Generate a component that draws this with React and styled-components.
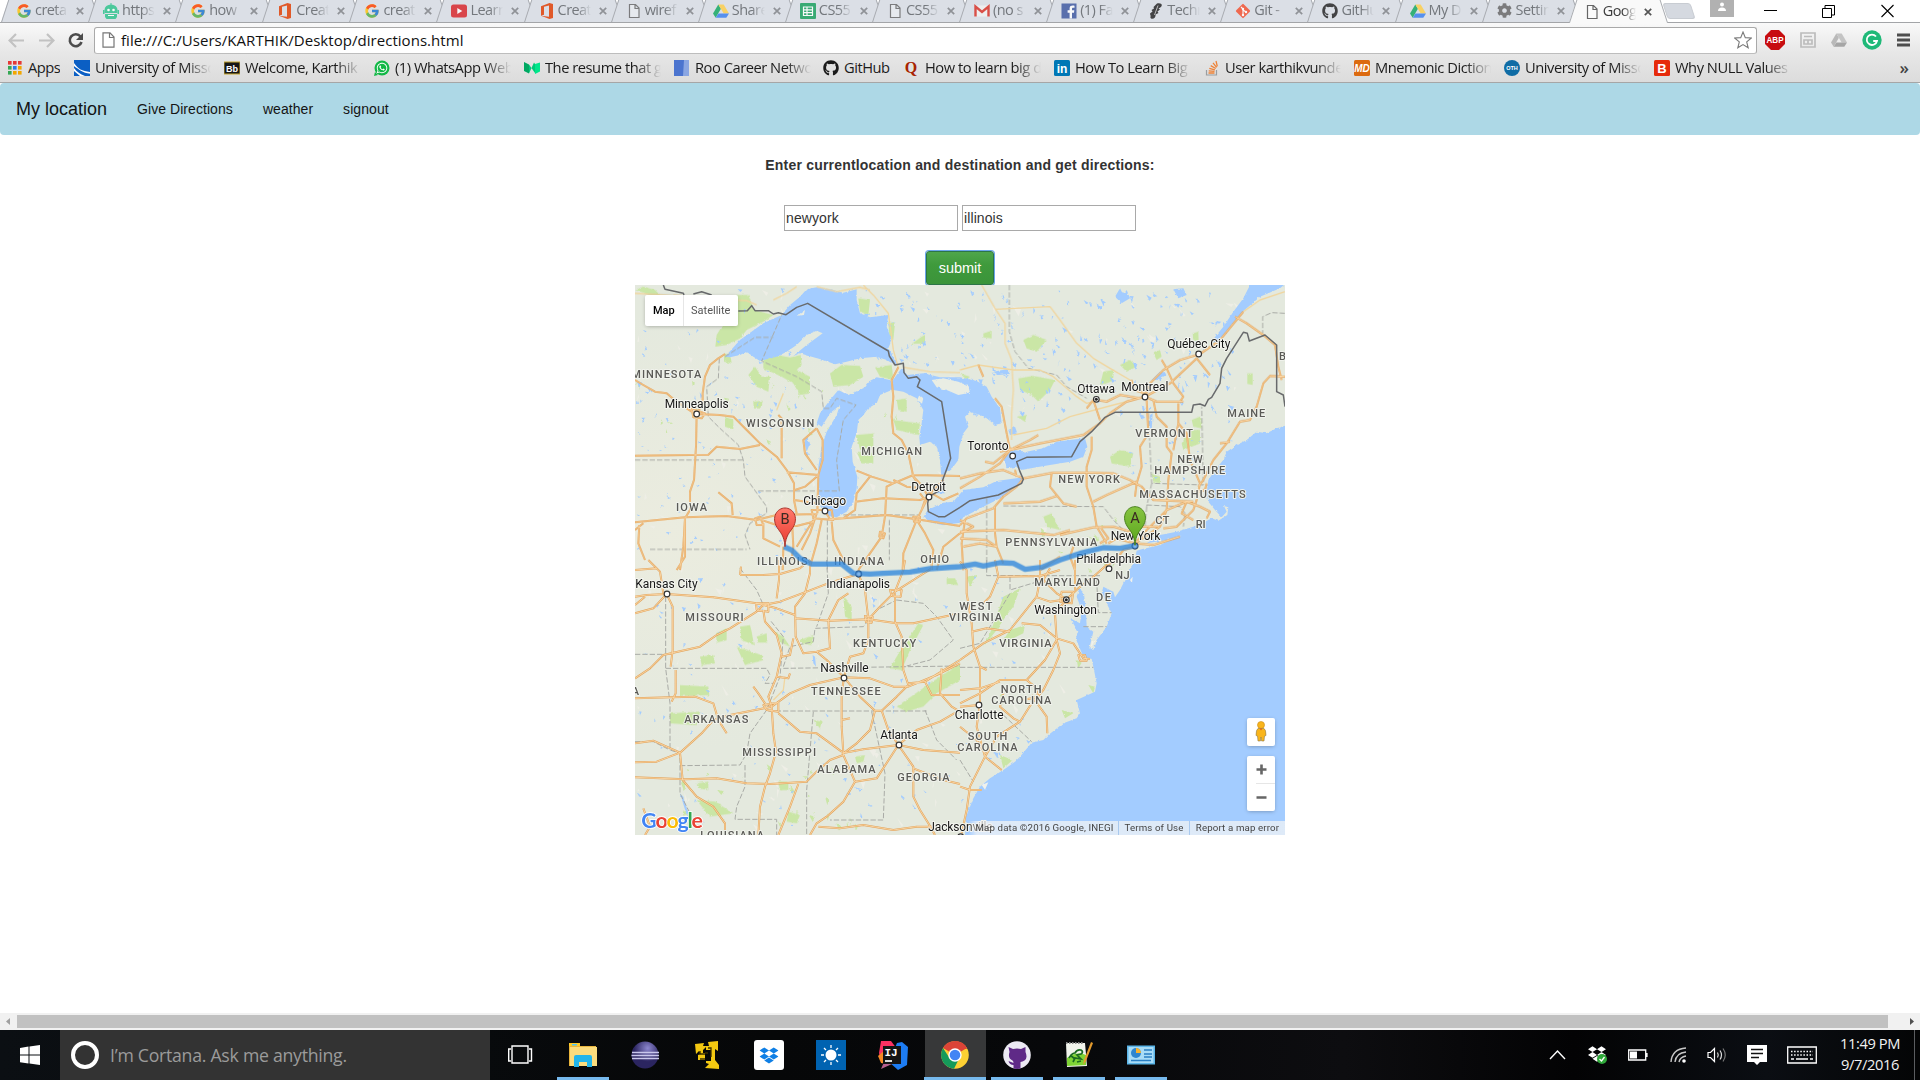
import React from 'react';
import styled, { createGlobalStyle, css } from 'styled-components';
import { FcGoogle } from 'react-icons/fc';
import { FaGithub, FaWhatsapp, FaDropbox, FaCog } from 'react-icons/fa';

const UI = '"Open Sans", "Noto Sans", sans-serif';
const ARIAL = '"Liberation Sans", Arial, sans-serif';

const Global = createGlobalStyle`
  * { box-sizing: border-box; }
  body { margin: 0; background: #fff; overflow: hidden; }
`;

const Screen = styled.div`
  width: 1920px;
  height: 1080px;
  display: flex;
  flex-direction: column;
  font-family: ${UI};
  overflow: hidden;
`;

/* ---------- tab strip ---------- */
const TabStrip = styled.div`
  height: 23px;
  display: flex;
  padding-left: 5px;
  background: #fff;
  position: relative;
  border-bottom: 1px solid #a3a5a8;
  flex: none;
`;
const Tab = styled.div`
  width: 87.1px;
  height: ${(p) => (p.$active ? 23 : 22)}px;
  flex: none;
  position: relative;
  z-index: ${(p) => (p.$active ? 3 : 1)};
  display: flex;
  align-items: center;
  padding: 0 8px 0 11px;
  color: ${(p) => (p.$active ? '#3c3c3c' : '#74787d')};
  &::before,
  &::after {
    content: '';
    position: absolute;
    z-index: -1;
    top: -2px;
    bottom: 0;
    background: ${(p) => (p.$active ? '#f9f9f9' : '#dbdfe6')};
  }
  &::before {
    left: 0;
    width: 60%;
    border-left: 1px solid #a8abb0;
    transform: skewX(-18deg);
  }
  &::after {
    right: -4px;
    width: 62%;
    border-right: 1px solid #a8abb0;
    transform: skewX(18deg);
  }
`;
const TabIcon = styled.span`
  width: 16px;
  height: 16px;
  flex: none;
  display: flex;
  opacity: ${(p) => (p.$active ? 1 : 0.82)};
`;
const TabTitle = styled.span`
  width: 33px;
  margin-left: 3px;
  font-size: 14.5px;
  line-height: 18px;
  height: 20px;
  letter-spacing: -0.55px;
  white-space: pre;
  overflow: hidden;
  mask-image: linear-gradient(90deg, #000 60%, transparent);
`;
const TabClose = styled.svg`
  width: 8px;
  height: 8px;
  margin-left: 8px;
  flex: none;
`;
const NewTab = styled.div`
  width: 28px;
  height: 16px;
  margin: 3px 0 0 5px;
  background: #d5d9e0;
  border: 1px solid #c8ccd2;
  border-radius: 3px;
  transform: skewX(18deg);
  flex: none;
`;
const WindowControls = styled.div`
  margin-left: auto;
  display: flex;
  padding-right: 26px;
`;
const UserBadge = styled.div`
  width: 24px;
  height: 17px;
  background: #b1b1b1;
  margin-right: 30px;
`;
const ControlIcon = styled.svg`
  width: 13px;
  height: 22px;
  margin-left: ${(p) => p.$gap || 0}px;
`;

/* ---------- toolbar ---------- */
const ToolArea = styled.div`
  height: 60px;
  flex: none;
  background: linear-gradient(#f9f9f9, #e7e7e7 50%, #dcdcdc);
  border-bottom: 1px solid #a6a6a6;
`;
const Toolbar = styled.div`
  height: 34px;
  display: flex;
  align-items: center;
  padding: 0 8px;
`;
const NavIcon = styled.svg`
  width: 17px;
  height: 17px;
  flex: none;
  margin-right: ${(p) => p.$gap || 0}px;
`;
const Omnibox = styled.div`
  width: 1663px;
  height: 27px;
  flex: none;
  margin-left: 8px;
  border: 1px solid #a9a9a9;
  border-bottom-color: #bdbdbd;
  border-radius: 3px;
  background: #fff;
  display: flex;
  align-items: center;
  padding: 0 4px 0 7px;
`;
const Url = styled.span`
  flex: 1;
  margin-left: 6px;
  font-size: 15px;
  letter-spacing: 0.04px;
  color: #111;
`;
const Extensions = styled.div`
  display: flex;
  align-items: center;
  justify-content: space-between;
  width: 145px;
  margin-left: 8px;
`;
const Bookmarks = styled.div`
  height: 24px;
  display: flex;
  align-items: center;
  padding: 0 11px 2px 8px;
  color: #1c1c1c;
`;
const Bookmark = styled.div`
  width: ${(p) => p.$w}px;
  height: 22px;
  flex: none;
  display: flex;
  align-items: center;
  svg { flex: none; }
`;
const BookmarkText = styled.span`
  margin-left: 5px;
  width: ${(p) => (p.$fade ? '116px' : 'auto')};
  overflow: hidden;
  white-space: pre;
  font-size: 14.7px;
  line-height: 18px;
  height: 21px;
  letter-spacing: -0.47px;
  ${(p) => p.$fade && css`mask-image: linear-gradient(90deg, #000 78%, transparent);`}
`;
const More = styled.span`
  margin-left: auto;
  font-size: 17px;
  line-height: 18px;
  font-weight: 600;
  color: #444;
`;

/* ---------- page ---------- */
const Page = styled.main`
  height: 930px;
  flex: none;
  font-family: ${ARIAL};
  font-size: 14px;
  color: #333;
  display: flex;
  flex-direction: column;
  align-items: center;
`;
const SiteNav = styled.nav`
  align-self: stretch;
  height: 52px;
  background: #add8e6;
  border-radius: 4px;
  display: flex;
  align-items: center;
  gap: 30px;
  padding-left: 16px;
  color: #141414;
`;
const NavLink = styled.span`
  letter-spacing: 0.06px;
`;
const Brand = styled.span`
  font-size: 18px;
`;
const Heading = styled.h4`
  margin: 20px 0 0;
  font-size: 14px;
  line-height: 20px;
  letter-spacing: 0.2px;
`;
const Fields = styled.div`
  display: flex;
  gap: 4px;
  margin-top: 30px;
`;
const Field = styled.input`
  width: 174px;
  height: 26px;
  border: 1px solid #a9a9a9;
  padding: 1px;
  font: 14px ${ARIAL};
  letter-spacing: 0.1px;
  color: #333;
  outline: none;
`;
const Submit = styled.button`
  width: 68px;
  height: 34px;
  margin: 20px 0 0;
  border: 1px solid #2d7548;
  border-radius: 3px;
  background: linear-gradient(#4fa64c, #3f9a3c 40%, #3b943a);
  box-shadow: 0 0 0 1px #6ba5ea;
  color: #fff;
  font: 14.5px ${ARIAL};
  padding: 0 0 1px;
`;
const MapBox = styled.div`
  width: 650px;
  height: 550px;
  position: relative;
  overflow: hidden;
  background: #e4e9de;
  font-family: Roboto, sans-serif;
`;
const MapArt = styled.svg`
  display: block;
  width: 650px;
  height: 550px;
`;
const MapTypes = styled.div`
  position: absolute;
  left: 10px;
  top: 10px;
  height: 31px;
  display: flex;
  background: #fff;
  border-radius: 2px;
  box-shadow: 0 1px 4px -1px rgba(0, 0, 0, 0.35);
`;
const MapType = styled.span`
  width: ${(p) => p.$w}px;
  line-height: 31px;
  text-align: center;
  font-size: 11px;
  font-weight: ${(p) => (p.$on ? 500 : 400)};
  color: ${(p) => (p.$on ? '#000' : '#565656')};
  & + & { border-left: 1px solid #e6e6e6; }
`;
const MapControl = styled.div`
  position: absolute;
  left: 612px;
  top: ${(p) => p.$top}px;
  width: 28px;
  height: ${(p) => p.$h}px;
  background: #fff;
  border-radius: 2px;
  box-shadow: 0 1px 4px -1px rgba(0, 0, 0, 0.35);
`;
const MapFooter = styled.div`
  position: absolute;
  right: 0;
  bottom: 0;
  height: 14px;
  display: flex;
  background: linear-gradient(90deg, rgba(245, 245, 245, 0), rgba(245, 245, 245, 0.72) 9px);
  font-size: 9.7px;
  line-height: 14px;
  color: #444;
`;
const FootItem = styled.span`
  width: ${(p) => p.$w}px;
  text-align: center;
  white-space: nowrap;
  padding-left: ${(p) => p.$pad || 0}px;
  letter-spacing: ${(p) => p.$ls || 0}px;
  & + & { border-left: 1px solid #a9c9ee; }
`;

/* ---------- scrollbar & taskbar ---------- */
const ScrollTrack = styled.div`
  height: 17px;
  flex: none;
  background: #f1f1f1;
  display: flex;
  align-items: center;
`;
const ScrollThumb = styled.div`
  width: 1871px;
  height: 13px;
  background: #c1c1c1;
  margin-right: auto;
`;
const ScrollArrow = styled.svg`
  width: 17px;
  height: 17px;
`;
const Taskbar = styled.footer`
  height: 50px;
  flex: none;
  display: flex;
  background: linear-gradient(90deg, #0b0f13, #060708 40%, #07080a 55%, #0d0d10 70%, #030304 82%, #0b0e13 92%, #040506);
`;
const Start = styled.div`
  width: 60px;
  display: flex;
  align-items: center;
  justify-content: center;
`;
const Cortana = styled.div`
  width: 430px;
  background: #333;
  display: flex;
  align-items: center;
  padding-left: 11px;
  gap: 11px;
  color: #9b9b9b;
  font-size: 17.7px;
  letter-spacing: -0.27px;
`;
const Ring = styled.div`
  width: 28px;
  height: 28px;
  border: 4px solid #fff;
  border-radius: 50%;
`;
const TaskItem = styled.div`
  width: 62px;
  height: 50px;
  display: flex;
  align-items: center;
  justify-content: center;
  background: ${(p) => (p.$active ? 'linear-gradient(90deg, transparent 1px, #373839 1px)' : 'none')};
  border-bottom: 3px solid transparent;
  border-image: ${(p) => (p.$open
    ? (p.$active ? 'linear-gradient(90deg, transparent 1px, #76b9ed 1px)' : 'linear-gradient(90deg, transparent 6px, #76b9ed 6px, #76b9ed 56px, transparent 56px)') + ' 1'
    : 'none')};
  border-top: 0;
  border-left: 0;
  border-right: 0;
  svg { margin-top: 3px; }
`;
const Tray = styled.div`
  margin-left: auto;
  display: flex;
  align-items: center;
`;
const TrayIcon = styled.svg`
  height: 30px;
  width: ${(p) => p.$w}px;
  margin-right: ${(p) => p.$gap}px;
`;
const Clock = styled.div`
  width: 64px;
  text-align: center;
  color: #f2f2f2;
  font-size: 14.7px;
  line-height: 21px;
  letter-spacing: -0.4px;
  padding-bottom: 2px;
  margin-right: 12px;
`;
const DesktopEdge = styled.div`
  width: 6px;
  height: 50px;
  border-left: 1px solid #5b5d60;
`;

/* ---------- small icons ---------- */
const S = ({ s = 16, children, vb = '0 0 16 16' }) => (
  <svg width={s} height={s} viewBox={vb}>{children}</svg>
);
const PageIcon = () => <S><path d="M3.5 1.5h6l3.5 3.5v9.5h-9.5zM9 1.5v4h4" fill="#fff" fillOpacity=".4" stroke="#666" strokeWidth="1.2" /></S>;
const Robot = () => (
  <S><path d="M1.5 10V7a6.5 5.5 0 0 1 13 0v3z" fill="#2dc48d" /><path d="M7.5 0h1v2h-1zM0 7h1.5v4H0zM14.500 7H16v4h-1.500zM2 11h12v3l-1.500 2h-9L2 14z" fill="#2dc48d" /><circle cx="5.500" cy="7" r="1.300" fill="#fff" /><circle cx="10.500" cy="7" r="1.300" fill="#fff" /><path d="M5 12.500h6" stroke="#fff" /></S>
);
const Office = () => <S><path d="M2 3.300L10.500 0 14 1v14l-3.500 1L2 12.800l8 1V2.500L5 3.700v8L2 12.800z" fill="#e23c00" /></S>;
const YT = () => <S><rect x="0" y="1.500" width="16" height="13" rx="2.500" fill="#d9252a" /><path d="M6.300 5l5 3-5 3z" fill="#fff" /></S>;
const Drive = ({ grey }) => (
  <S><path d="M5.300 1.500L0 10.500l2.700 4.300 5.200-9z" fill={grey ? '#b9b9b9' : '#11a861'} /><path d="M5.300 1.500h5.400l5.300 9h-5.300z" fill={grey ? '#c4c4c4' : '#ffcf48'} /><path d="M5.400 10.500H16l-2.700 4.300H2.700z" fill={grey ? '#a6a6a6' : '#3a7ff0'} /></S>
);
const Sheets = () => <S><rect width="16" height="16" rx="1" fill="#169f5c" /><path d="M3.500 4h9v8.500h-9zM3.500 6.800h9M3.500 9.600h9M7 4v8.500" fill="none" stroke="#fff" strokeWidth="1.200" /></S>;
const Gmail = () => <S><path d="M1 2.500h14v11H1z" fill="#f2f2f2" /><path d="M1.500 13.500V3.500L8 9l6.500-5.500v10" fill="none" stroke="#d93025" strokeWidth="2.400" /></S>;
const Facebook = () => <S><rect width="15" height="15" x=".5" y=".5" fill="#3d57a0" /><path d="M11 15.500V9.700h2l.3-2.400H11V6c0-.8.300-1.200 1.200-1.200h1.300V2.700C11 2.300 8.600 2.500 8.600 5.500v1.800h-2v2.400h2v5.800z" fill="#fff" /></S>;
const Techo = () => <S><path d="M9 .5c4-.8 6 1 4 3.500l-2.500 1.500 1.500 1-2.500 2 1 1.500-3 1.500C8 14 6 16.500 3 15.500c-1.500-1 0-3 1-4L2.500 13 2 10.500l2.500-2-1-1.500L6 5.500 5.500 4z" fill="#222" /><path d="M10 2.500L6.500 12" stroke="#ddd" strokeWidth=".8" /></S>;
const GitIcon = () => <S><rect x="2.700" y="2.700" width="10.600" height="10.600" rx="1" transform="rotate(45 8 8)" fill="#f4502f" /><path d="M6 4l2 2v6M8 7l3 2" stroke="#fff" strokeWidth="1.100" fill="none" /><circle cx="8" cy="6" r="1.200" fill="#fff" /><circle cx="8" cy="12" r="1.200" fill="#fff" /><circle cx="11" cy="9" r="1.200" fill="#fff" /></S>;

const AppsIcon = () => {
  const c = ['#e53935', '#e53935', '#e53935', '#35a853', '#2b7de9', '#f2a600', '#35a853', '#f2a600', '#f2a600'];
  return <svg width="15" height="16" viewBox="0 0 15 16">{c.map((f, i) => <rect key={i} x={(i % 3) * 5} y={1 + Math.floor(i / 3) * 5} width="3.600" height="3.600" fill={f} />)}</svg>;
};
const Badge = ({ bg, fg = '#fff', t, fs = 10, round, italic, y = 11.7 }) => (
  <svg width="16" height="16" viewBox="0 0 16 16">
    {round ? <circle cx="8" cy="8" r="8" fill={bg} /> : <rect width="16" height="16" rx="1.500" fill={bg} />}
    <text x="8" y={y} textAnchor="middle" fontSize={fs} fontWeight="700" fontStyle={italic ? 'italic' : 'normal'} fontFamily="Liberation Sans" fill={fg}>{t}</text>
  </svg>
);

const TABS = [
  [<FcGoogle size={16} />, 'creta'], [<Robot />, 'https'], [<FcGoogle size={16} />, 'how '], [<Office />, 'Creat'],
  [<FcGoogle size={16} />, 'creat'], [<YT />, 'Learn'], [<Office />, 'Creat'], [<PageIcon />, 'wiref'],
  [<Drive />, 'Share'], [<Sheets />, 'CS55'], [<PageIcon />, 'CS55'], [<Gmail />, '(no s'],
  [<Facebook />, '(1) Fa'], [<Techo />, 'Techn'], [<GitIcon />, 'Git - '], [<FaGithub size={16} color="#222" />, 'GitHu'],
  [<Drive />, 'My Dr'], [<FaCog size={15} color="#666" />, 'Settin'], [<PageIcon />, 'Goog'],
];

const BOOKMARKS = [
  [66, <AppsIcon />, 'Apps', false],
  [150, <S><path d="M0 0h16v16H0z" fill="#0b5fc4" /><path d="M0 3c4 6 8 8 16 9v1.800C9 13 4 9 0 6zM0 8c3 4 6 6 11 8H6L0 11z" fill="#fff" /></S>, 'University of Misso'],
  [150, <svg width="16" height="16"><rect y="2" width="16" height="12" fill="#161616" stroke="#c8a830" /><text x="8" y="11.500" fontSize="9" fontWeight="700" textAnchor="middle" fill="#fff" fontFamily="Liberation Sans">Bb</text></svg>, 'Welcome, Karthik'],
  [150, <svg width="16" height="16" viewBox="0 0 16 16"><circle cx="8" cy="8" r="7.500" fill="#12b846" /><path d="M0 16l1-4 3 3z" fill="#12b846" /><FaWhatsapp size={12} x={2} y={2} color="#fff" /></svg>, '(1) WhatsApp Web'],
  [150, <S><path d="M0 2l5 2.500v9L0 11z" fill="#00a862" /><path d="M5 4.500L11 13V4l-1-1.500L5 13.500z" fill="#00c979" /><path d="M11 4l5-1.500v9L11 14z" fill="#00e68a" /></S>, 'The resume that g'],
  [149, <S><path d="M0 0h10v16H0z" fill="#4b74cf" /><path d="M10 0h5v16h-6z" fill="#8aa6e2" /></S>, 'Roo Career Netwo'],
  [82, <FaGithub size={16} color="#1b1b1b" />, 'GitHub', false],
  [149, <svg width="15" height="16"><text x="6" y="13" textAnchor="middle" fontFamily="Liberation Serif" fontWeight="700" fontSize="16" fill="#a82400">Q</text></svg>, 'How to learn big d'],
  [150, <Badge bg="#0077b5" t="in" fs={12} y={12.5} />, 'How To Learn Big '],
  [150, <S><path d="M2.500 10v5h10v-5" fill="none" stroke="#9a9da0" strokeWidth="1.200" /><path d="M4.500 13h6M4.700 10.800l5.800.6M5.300 8.300l5.600 1.500M6.700 5.600l5 2.900M9 2.800l3.600 4.500M12 1l1.300 5.400" stroke="#ef8236" strokeWidth="1.300" /></S>, 'User karthikvunde'],
  [150, <Badge bg="#dc6a10" t="MD" fs={10} italic />, 'Mnemonic Dictiona'],
  [150, <Badge bg="#0f6ca5" t="OTH" fs={5.5} round y={10} />, 'University of Misso'],
  [150, <Badge bg="#e62b0b" t="B" fs={13} y={12.6} />, 'Why NULL Values '],
];

/* ---------- map data (three drawing units per pixel, four tiles) ---------- */
const TILE = [[0, 0], [990, 0], [0, 840], [990, 840]];
const toD = (s) => 'M' + s;
const ROADS = [
  ['15,300 40,315 75,335 110,340 140,365 185,395 200,402', '285,222 265,235 240,255 225,290 218,340 218,370 200,402', '200,402 270,405 310,410 350,450 390,490 440,530 470,570 492,610 492,660 500,700', '200,402 198,500 192,600 180,635 180,690 165,715 160,800 150,870', '15,527 235,524 260,500 330,507 390,495', '470,577 565,585', '445,405 455,415 455,535', '560,445 520,480 525,520 560,570', '560,445 578,480 578,540 565,585 562,700', '495,630 525,620 560,590', '492,660 560,670', '15,727 165,712 290,708 380,720 400,715 440,705 560,702', '265,637 305,670 308,705', '400,730 400,775 450,800', '400,722 440,735 500,738 550,725', '485,700 490,800 485,840', '460,800 458,870', '28,735 25,790 45,840', '15,750 40,730', '140,870 165,830 165,715', '585,693 600,718 640,715 675,690 680,640 720,590', '680,572 725,590 790,610 850,585 990,588', '600,718 770,705 860,718 990,738', '675,665 760,655 870,660 900,650', '805,262 785,300 790,350 785,410 790,460 815,480 835,520 850,590 870,610 895,650', '790,610 770,620 765,710 755,770 720,820 685,870', '895,650 870,700 860,720 840,770 820,820 818,870', '860,720 885,760 910,810 905,850', '605,725 610,780 640,840', '560,700 540,760 515,810', '575,720 560,790 540,860', '550,720 500,800', '850,590 870,620 940,660 985,640', '940,600 900,640', '545,690 605,690 610,720 550,715z', '375,715 390,710 400,735 380,735z', '850,710 870,710 870,725 852,725z', '185,385 225,400 215,415 190,412z', '990,760 940,800 920,870', '750,755 765,760 760,775 748,770z', '870,640 885,660 875,690', '790,600 830,620 880,625'],
  ['55,255 70,290', '105,355 125,380 140,460 150,510 120,550 60,590 0,625', '75,545 100,550 150,510 240,490 370,465 420,430 450,400 500,365 555,350', '400,360 420,420', '410,360 440,365 480,345 540,355', '380,385 400,360', '555,350 570,310 610,270 660,240 720,222 780,180 850,95', '555,350 630,310 710,235 750,285', '605,240 620,265 640,310 670,350 660,365', '555,350 590,365 670,365', '825,110 860,130 910,165 945,195 955,260 965,300', '560,360 565,460 540,500 545,560 530,610 525,650', '580,360 590,410 620,440 620,500 635,520 625,600 620,690 600,740 525,790', '655,370 655,430 680,460 690,540 720,610 710,660 700,690', '655,430 640,510', '975,290 930,288 910,310 890,380 870,420 840,425 800,490 760,540 730,600 715,620', '780,490 810,485', '395,470 395,510 380,560 380,620 400,680 410,740 440,790', '190,595 280,578 380,577 460,580 510,600 545,620 580,660 700,665', '190,595 170,620 130,650 100,685 20,715 0,735', '275,580 270,620 290,645 310,670 350,680', '130,670 240,665 290,648', '400,665 440,645 530,605', '0,755 130,750 280,765 330,750', '300,765 400,742 460,740 530,760', '105,680 105,760 110,800 130,850', '15,720 5,790 10,870', '525,790 560,750 620,690 680,665 720,680 750,695 740,715', '610,745 650,740 700,690', '525,800 490,810 460,850', '525,790 580,795 660,770', '445,790 470,775 525,790', '340,800 330,830 345,870', '240,870 300,830', '120,515 160,505 210,480 235,465', '0,595 60,580 130,570 190,595', '165,570 170,590', '0,720 40,740 0,760', '680,665 665,700 700,720', '595,740 530,740 500,780', '700,640 735,630 740,610', '420,740 445,775 420,790', '560,340 520,330 515,300', '110,800 80,780 0,775', '10,800 60,790 110,800'],
  ['15,110 50,105 110,102 250,112 380,130 440,145 495,165', '15,160 70,145 110,102', '55,0 90,35 100,100', '15,30 15,30 80,25', '110,102 128,140 128,270 122,320', '15,355 60,325 100,285 210,260 260,225 300,205 380,155 400,135', '400,135 450,125 530,95 600,68 685,42', '330,45 400,45 450,42 510,25 540,0', '330,45 333,20', '447,0 447,60 440,115', '540,0 540,40 525,100 495,140 497,230 520,280 560,275 600,265 595,180', '495,175 600,182 715,178 800,190 850,190 990,160', '400,150 405,185 440,225 455,280 440,350 415,410 425,440', '455,290 480,285 490,235', '595,180 625,120 655,100', '685,42 705,90 715,178 715,240 700,280 660,290 642,352', '715,178 750,140 795,95 820,30 825,0', '795,100 795,185 815,230 820,330 835,375', '795,95 850,60 905,25', '905,0 905,30', '560,275 590,300 642,352', '642,352 540,375 480,400 425,440 300,465 250,480 215,520 150,578 80,605 15,607', '15,415 120,412 195,410 250,430 265,480 290,520', '137,330 137,400 125,425', '370,380 385,400 405,430', '440,350 475,355 480,340', '425,440 430,520 438,575 420,640 405,680 390,740 385,825', '400,435 445,428 445,455 410,450z', '378,130 415,130 415,155 380,150z', '445,460 510,515 560,520 635,575', '642,352 635,400 635,500 640,580', '642,352 690,410 735,452 755,452 775,510 805,555', '642,352 720,355 790,380 835,380 920,345 990,310', '835,375 800,410 755,452', '735,452 720,510 680,550 640,580', '635,480 660,475', '635,580 700,568 805,555', '640,585 600,600 560,635 530,665 420,672 350,670 260,655 165,658 15,652', '150,578 158,660 200,710 250,740 285,790 285,825', '15,550 70,542 150,578', '640,585 675,665 640,725 590,770 560,790 540,825', '675,665 740,655 805,555', '805,555 850,620 850,710 870,750 895,790 915,825', '805,555 880,570 990,578', '850,625 940,660 990,672', '505,672 480,740 445,825', '565,800 630,805 700,795 790,810 860,800 920,800', '885,365 905,405 990,405', '935,325 930,400 965,440 990,455', '805,555 860,510 930,485 990,450', '40,745 60,800 45,825', '780,90 815,90 812,110 785,108z', '705,168 728,170 725,188 708,186z', '835,370 885,365 990,300', '15,135 45,110'],
  ['0,5 20,30 20,100 35,190 40,260 60,320 60,430 50,500 75,590 30,680 20,750 5,820', '105,0 115,50 90,110 70,130', '115,50 240,48 300,30', '240,0 240,60 230,110 150,210 70,250 0,300', '35,215 80,205 150,215', '225,110 270,125 320,118 355,85 400,50 440,15 470,0', '270,25 250,60 290,100 320,118', '345,0 345,90', '320,118 285,160 290,240 255,300 200,360 120,360 60,400 0,430', '185,190 240,195 290,235 340,250 370,295 390,297', '290,240 300,280 280,330 250,390 215,430 180,485 110,530 75,590', '0,390 60,385 120,365', '215,405 235,435 260,470 262,520', '130,400 120,440 160,475 180,485', '0,440 57,435', '75,590 125,630', '0,680 30,690 65,690', '0,500 50,540 75,580', '60,320 80,330', '305,95 340,95 335,130 300,125z', '355,285 375,285 380,302 360,302z', '200,360 225,380 235,410 190,420'],
];
const MINOR = [
  ['15,40 100,45 200,55', '130,45 300,60 350,62 380,75', '430,60 470,40 500,20', '560,20 620,35 690,22 720,30', '700,15 730,45 775,100 785,170 790,210 805,262', '820,262 900,275 990,278', '440,390 460,340'],
  ['65,15 105,85 135,130 135,190 155,240 160,330 155,400 155,480', '105,88 270,80 300,120 350,190 400,235 450,265 510,300 555,350', '0,270 55,255 160,270 240,270 280,290 350,350 380,370 400,365', '160,465 260,445 330,410 460,375 520,360', '850,95 900,60 975,35'],
  ['430,420 460,390 465,350'], [],
];
const INTL = [
  ['100,15 105,28 160,40 162,45', '190,42 215,35 245,45', '325,93 352,92 365,77 375,92 415,92 430,102 445,98 468,104 500,82 533,70 775,213 778,228 795,255 820,250 822,278 835,295 860,290 870,300 862,320 935,365 962,535 938,600 940,625 897,650 893,670 895,695 925,710 945,710 990,682'],
  ['0,682 30,662 115,645 185,610 190,598 180,575 170,545 200,532 335,530 360,485 395,455 435,412 465,397 695,397 700,375 720,372 735,378 745,358 755,352 780,310 785,265 800,235 850,157 862,160 868,183 915,165 950,195 950,335 970,345 975,380'],
  [], [],
];
const STATE_LINES = [
  ['268,235 265,295 230,320 235,410 270,445 325,495 340,540 345,590 410,680 410,700 360,730 345,765 360,808', '15,540 340,540', '60,808 350,808', '385,633 628,633 620,540 640,420 678,375 620,355 600,385 580,385 575,335 500,290 395,243 455,105', '285,230 375,172 430,172', '592,720 592,870', '778,720 778,840', '640,705 865,705'],
  ['148,15 148,155 165,215 205,265 290,285 320,320 380,355', '565,400 575,610 730,615 725,380', '130,678 430,680 460,720 520,780', '560,675 660,680 675,700 670,740', '80,655 80,870', '560,680 555,740', '975,100 935,98 908,110 908,160', '575,610 560,680'],
  ['330,25 380,90 400,135', '107,110 107,325 120,430 120,570 150,580 150,700 180,760', '107,325 410,325 420,345 405,370 430,370', '15,283 107,283', '150,617 330,615 350,580 360,520 410,450 450,350 460,230 420,180', '460,320 480,260 550,245 555,205 700,200 740,150 800,120', '460,325 990,318', '415,453 890,453', '550,455 530,690 530,825', '725,455 765,640 760,780 600,780', '345,615 345,680 320,740 315,778 440,778 440,825', '590,0 595,100 560,200', '800,120 880,130 920,170 970,240 900,300 830,318', '885,450 920,540 980,600', '15,545 70,545 120,570'],
  ['0,322 400,322', '0,265 60,250 150,100', '80,0 80,47 420,47', '130,465 215,545', '410,60 415,158 455,158', '150,50 150,90 250,60', '370,200 440,200', '0,600 40,665'],
];
const PARKS = [
  ['275,60 320,45 355,45 372,90 430,105 400,125 350,150 330,175 290,195 256,200 260,165 275,140', '400,240 440,225 480,232 512,225 515,255 500,270 540,290 540,340 510,345 490,310 455,290 400,265', '600,280 635,255 690,258 700,290 660,315 610,320', '735,262 785,255 790,300 750,290', '355,285 375,260 395,290 420,290 415,335 380,320', '370,365 398,362 395,385 372,385', '685,55 720,60 715,105 690,95', '680,465 730,460 730,500 690,510', '680,515 730,520 730,550 695,550', '800,360 830,355 830,395 805,390', '790,420 870,430 865,465 800,450', '775,125 795,130 790,180 778,170', '15,30 40,20 75,30 95,50 60,45', '282,220 300,225 305,250 282,245', '875,170 885,165 885,190 845,192', '285,410 310,420 310,450 285,440'],
  ['175,295 220,288 285,300 270,330 235,365 215,345 180,330', '190,180 220,165 260,180 230,215 200,205', '480,255 510,240 530,260 500,275', '430,275 460,270 455,305 420,315', '70,160 95,152 95,175 70,172', '450,530 480,510 520,520 510,560 455,550', '690,450 720,450 720,490 670,510 665,490', '862,280 878,280 878,315 862,312', '250,710 275,700 300,750 260,740', '695,420 720,410 725,445 700,440', '170,410 200,405 195,425', '698,160 715,155 716,185 700,180', '580,220 600,210 605,230 590,240', '575,580 600,590 600,610 580,605', '0,280 30,290 20,300'],
  ['258,220 290,205 290,240 260,248', '330,200 360,195 365,215 372,255 335,240', '380,230 410,220 412,248 385,248', '320,260 395,285 400,300 345,315', '210,290 250,285 255,310 215,315', '150,375 235,380 238,405 150,408', '120,460 210,455 200,495 120,490', '640,110 665,140 665,180 645,170', '820,260 865,190 880,195 840,270 815,330 780,325 800,290', '800,440 900,370 990,310 990,360 920,400 880,440 830,455', '200,670 235,665 235,690 205,685', '200,720 255,725 310,760 240,770', '510,240 550,225 545,255 515,250', '475,755 510,765 500,790 470,785', '430,215 460,230 480,260 455,250', '550,480 575,485 570,505', '675,590 705,585 700,605 680,610', '445,665 475,665 475,690 450,690', '950,55 975,55 985,75 950,72'],
  ['130,110 180,85 160,140 140,165 110,210 70,260 90,220', '150,210 195,195 190,220 120,255', '20,50 50,45 30,80', '305,450 340,460 315,475', '385,375 405,380 400,400', '120,585 158,600 130,625', '350,300 365,308 355,325', '120,405 130,400 128,435'],
];
const WATER = [
  ['285,230 330,180 400,130 455,105 480,75 510,50 530,28 560,22 600,28 640,38 680,28 680,60 690,100 720,112 775,105 770,140 785,180 775,205 800,245 795,255 770,240 740,230 690,235 650,245 615,253 580,240 545,230 510,220 490,228 530,195 578,160 560,152 530,165 500,195 470,215 440,230 390,243 370,230 350,215 330,225 300,232',
    '625,330 655,345 700,325 715,305 740,292 780,300 790,315 785,330 750,345 740,370 715,385 700,405 685,420 680,460 665,500 668,545 682,590 680,625 670,665 650,695 620,712 595,708 575,680 565,640 565,560 575,500 590,455 620,405 630,375 600,400 575,440 560,430 570,400 600,360',
    '785,305 815,265 832,285 880,280 930,292 990,292 1040,303 1070,320 1085,350 1110,385 1115,430 1095,435 1070,415 1050,405 1020,395 1005,410 1015,440 1000,460 988,500 985,540 970,560 940,585 935,600 930,540 920,500 900,485 870,495 868,470 875,430 880,390 860,355 820,335 790,330',
    '893,690 940,668 970,665 1000,630 1060,622 1100,603 1180,592 1178,606 1130,645 1060,680 1000,712 990,728 940,736 905,728 880,712',
    '522,485 530,470 540,490 530,515', '915,625 945,615 945,640 920,640'],
  ['130,530 160,510 200,515 250,505 290,485 330,480 375,475 382,500 370,530 330,545 270,555 230,562 185,570 170,560 140,565 135,545',
    '990,0 960,25 900,50 860,85 840,105 820,130 800,160 770,185 750,190 790,140 820,95 850,55 875,5 875,0',
    '1000,430 950,445 920,460 890,455 860,480 830,495 800,515 790,540 765,570 745,600 740,640 745,665 765,690 785,712 800,695 792,678 805,682 802,705 775,722 755,715 735,725 700,740 650,755 600,765 560,790 620,780 665,765 600,795 545,808 530,812 525,835 500,890 480,930 465,952 460,935 430,920 425,940 445,980 455,1000 440,1040 410,1080 400,1110 388,1105 400,1055 380,1040 378,1000 372,940 358,925 350,950 365,990 360,1030 330,1015 355,1055 345,1070 370,1130 395,1137 400,1160 410,1210 405,1235 350,1260 360,1300 350,1315 310,1330 265,1365 250,1380 215,1388 180,1430 165,1445 130,1470 90,1495 60,1520 40,1555 18,1610 15,1680 1000,1680',
    '145,450 165,440 172,460 150,465', '640,28 670,25 680,45 655,55', '100,275 140,268 150,282 115,285', '570,405 578,400 575,450 568,440', '465,50 480,25 490,45 500,30 510,55 485,70', '575,300 600,275 620,285 590,300'],
  ['548,285 555,290 558,320 550,310', '150,700 160,710 178,770 170,765'], ['100,575 115,580 112,595'],
];
const STATES = [
  [['MINNESOTA', 4, 214, 293], ['WISCONSIN', 348, 553, 441], ['MICHIGAN', 694, 876, 525], ['IOWA', 138, 231, 693], ['ILLINOIS', 381, 533, 855], ['INDIANA', 612, 762, 855], ['OHIO', 871, 957, 849]],
  [['MAINE', 802, 916, 411], ['VERMONT', 526, 699, 471], ['NEW', 652, 728, 549], ['HAMPSHIRE', 583, 796, 581], ['NEW YORK', 295, 480, 609], ['MASSACHUSETTS', 538, 857, 654], ['CT', 586, 628, 732], ['RI', 707, 737, 743], ['PENNSYLVANIA', 136, 412, 798], ['B', 957, 978, 239]],
  [['MISSOURI', 166, 341, 183], ['KENTUCKY', 669, 859, 261], ['TENNESSEE', 543, 752, 404], ['A', 5, 26, 404], ['ARKANSAS', 163, 355, 489], ['MISSISSIPPI', 337, 558, 588], ['ALABAMA', 562, 737, 639], ['GEORGIA', 802, 959, 663], ['LOUISIANA', 211, 402, 836]],
  [['WEST', -2, 97, 150], ['VIRGINIA', -33, 126, 183], ['MARYLAND', 223, 420, 78], ['NJ', 466, 509, 57], ['DE', 408, 453, 123], ['VIRGINIA', 118, 275, 261], ['NORTH', 122, 245, 399], ['CAROLINA', 94, 274, 432], ['SOUTH', 23, 142, 540], ['CAROLINA', -8, 173, 573]],
];
const CITIES = [
  [['Minneapolis', 104, 296, 385, 200, 402], ['Detroit', 844, 948, 634, 897, 651], ['Chicago', 520, 648, 676, 585, 693]],
  [['Québec City', 622, 811, 205, 716, 222], ['Ottawa', 352, 465, 340, 409, 358, 1], ['Montreal', 484, 625, 334, 555, 351], ['Toronto', 22, 146, 511, 158, 528], ['New York', 452, 601, 781, 525, 798], ['Philadelphia', 349, 543, 850, 447, 866]],
  [['Kansas City', 16, 203, 85, 111, 102], ['Indianapolis', 589, 780, 85, 686, 42], ['Nashville', 571, 716, 337, 642, 354], ['Atlanta', 751, 863, 537, 807, 555], ['Jacksonville', 895, 1088, 813, 992, 830]],
  [['Washington', 223, 411, 162, 319, 119, 1], ['Charlotte', -16, 131, 477, 57, 435]],
];

/* Seeded scatter used for ponds and bare patches. */
function scatter(n, seed, x0, y0, x1, y1, size) {
  let s = seed;
  const r = () => ((s = (s * 16807) % 2147483647) / 2147483647);
  let d = '';
  for (let i = 0; i < n; i++) {
    const x = x0 + r() * (x1 - x0);
    const y = y0 + r() * (y1 - y0);
    const w = (r() - 0.3) * size;
    const h = (0.3 + r()) * size;
    d += `M${x.toFixed(0)},${y.toFixed(0)}l${w.toFixed(0)},${h.toFixed(0)}l${(4 + r() * 4).toFixed(0)},${(-h * r()).toFixed(0)}z`;
  }
  return d;
}
const PONDS = scatter(170, 71, 990, 30, 1800, 420, 17) + scatter(60, 13, 20, 20, 500, 420, 15) + scatter(45, 991, 700, 20, 990, 250, 14)
  + scatter(120, 37, 20, 860, 1150, 1640, 12) + scatter(60, 5, 20, 420, 560, 850, 9) + scatter(25, 88, 1500, 400, 1800, 600, 10) + scatter(30, 19, 1080, 900, 1300, 1400, 9);
const PATCHES = scatter(60, 409, 20, 30, 1900, 420, 26) + scatter(120, 203, 20, 420, 1300, 1640, 26);
const GREENS = scatter(24, 77, 20, 280, 800, 480, 18) + scatter(30, 717, 150, 1450, 700, 1640, 20) + scatter(16, 717, 1230, 700, 1500, 880, 18);

const Tiles = ({ data, ...rest }) => (
  <g {...rest}>
    {data.map((list, i) => <path key={i} transform={`translate(${TILE[i]})`} d={list.map(toD).join('')} />)}
  </g>
);
const Areas = ({ data, ...rest }) => (
  <g {...rest}>
    {data.map((list, i) => <path key={i} transform={`translate(${TILE[i]})`} d={list.map((s) => 'M' + s + 'z').join('')} />)}
  </g>
);
const Pin = ({ x, y, id, light, dark, edge, label }) => (
  <g transform={`translate(${x},${y})`}>
    <linearGradient id={id} x1="0" y1="0" x2="0" y2="1"><stop offset="0" stopColor={light} /><stop offset="1" stopColor={dark} /></linearGradient>
    <path d="M0,0C-2,-34 -14,-42 -24,-58C-42,-88 -24,-116 0,-116C24,-116 42,-88 24,-58C14,-42 2,-34 0,0z" fill={`url(#${id})`} stroke={edge} strokeWidth="3" />
    <text x="0" y="-67" textAnchor="middle" fontSize="44" fill="#3a2a22">{label}</text>
  </g>
);

const RoadMap = () => (
  <MapArt viewBox="15 15 1950 1650">
    <defs>
      <filter id="coast" x="-2%" y="-2%" width="104%" height="104%" filterUnits="objectBoundingBox">
        <feTurbulence type="fractalNoise" baseFrequency="0.09" numOctaves="3" seed="4" />
        <feDisplacementMap in="SourceGraphic" scale="8" xChannelSelector="R" yChannelSelector="G" />
      </filter>
      <radialGradient id="plain" cx="0.05" cy="0.45" r="0.4"><stop offset="0" stopColor="#ebecdf" /><stop offset="1" stopColor="#e4e9de" /></radialGradient>
    </defs>
    <rect x="15" y="15" width="1950" height="1650" fill="url(#plain)" />
    <path d={PATCHES} fill="#eeeee6" />
    <g filter="url(#coast)">
      <Areas data={PARKS} fill="#cae6a6" />
      <path d={GREENS} fill="#cae6a6" />
      <path d={PONDS} fill="#a3ccff" />
      <Areas data={WATER} fill="#a3ccff" />
      <path d="M905,300L940,295 985,305 1015,318 1020,338 985,345 950,330 920,322zM500,108L525,90 522,104zM868,345l12,10 -4,16 -14,-12z" fill="#e9ede4" />
      <path d="M1395,1080l-14,28 4,-24zM1500,900l8,-10 -2,20zM1055,1515l20,-8 -10,22z" fill="#f0f1ec" />
    </g>
    <Tiles data={STATE_LINES} fill="none" stroke="#a9aba6" strokeWidth="3" strokeDasharray="16 6" />
    <Tiles data={MINOR} fill="none" stroke="#f0d6a0" strokeWidth="4" strokeLinejoin="round" />
    <Tiles data={ROADS} fill="none" stroke="#e2a45c" strokeWidth="6" strokeLinejoin="round" />
    <Tiles data={ROADS} fill="none" stroke="#fddcae" strokeWidth="2.500" strokeLinejoin="round" />
    <Tiles data={INTL} fill="none" stroke="#686a6c" strokeWidth="4.500" strokeLinejoin="round" />
    {STATES.map((list, i) => (
      <g key={i} transform={`translate(${TILE[i]})`} fontSize="33" fontWeight="500" fill="#5a5a56" stroke="#f0f2ec" strokeWidth="6" paintOrder="stroke" strokeLinejoin="round">
        {list.map(([t, a, b, y]) => <text key={t + y} x={a} y={y} textLength={b - a}>{t}</text>)}
      </g>
    ))}
    {CITIES.map((list, i) => (
      <g key={i} transform={`translate(${TILE[i]})`}>
        {list.map(([t, a, b, y, cx, cy, cap]) => (
          <g key={t}>
            <circle cx={cx} cy={cy} r="8.500" fill="#fff" stroke="#333" strokeWidth="3.500" />
            {cap && <circle cx={cx} cy={cy} r="4.500" fill="#222" />}
            <text x={a} y={y} textLength={b - a} fontSize="36" fill="#161616" stroke="#f4f5f0" strokeWidth="6" paintOrder="stroke" strokeLinejoin="round">{t}</text>
          </g>
        ))}
      </g>
    ))}
    <path d="M462,800L485,810 510,835 545,852 635,852 670,880 720,882 760,880 840,876 900,866 990,860 1035,852 1060,858 1110,848 1150,850 1185,868 1235,862 1290,840 1350,820 1420,803 1470,805 1515,797" fill="none" stroke="#2e86dc" strokeOpacity=".78" strokeWidth="16" strokeLinejoin="round" />
    <circle cx="1515" cy="798" r="8" fill="#7db4ea" stroke="#1d5fa8" strokeWidth="3" />
    <circle cx="686" cy="882" r="8" fill="#7db4ea" stroke="#1d5fa8" strokeWidth="3" />
    <Pin x={465} y={800} id="pinB" light="#ff7a6c" dark="#e8392f" edge="#a8332b" label="B" />
    <Pin x={1515} y={796} id="pinA" light="#86c440" dark="#5aa51c" edge="#48801c" label="A" />
    <text x="34" y="1644" fontSize="64" fontFamily="Lato" fontWeight="700" textLength="185" stroke="#fff" strokeWidth="5" paintOrder="stroke">
      <tspan fill="#4285f4">G</tspan><tspan fill="#ea4335">o</tspan><tspan fill="#fbbc05">o</tspan><tspan fill="#4285f4">g</tspan><tspan fill="#34a853">l</tspan><tspan fill="#ea4335">e</tspan>
    </text>
  </MapArt>
);

const TaskIcons = {
  view: <svg width="26" height="20" fill="none" stroke="#fff" strokeWidth="1.400"><path d="M4 1h16v17H4zM3 4H.7v12H3M21 4h2.500v12H21" /></svg>,
  files: <svg width="28" height="26" viewBox="0 0 28 26"><path d="M0 1h11v3h16v20H0z" fill="#e9b53c" /><path d="M1 5h27v19H1z" fill="#fbdc7d" /><path d="M0 1h11v3H0z" fill="#ffca28" /><path d="M3 2h5v1.500H3z" fill="#4fc3f7" /><path d="M5 25V15q0-2 2-2h14q2 0 2 2v10h-5v-5h-8v5z" fill="#22b5ea" /></svg>,
  eclipse: <svg width="30" height="30" viewBox="0 0 30 30"><radialGradient id="ecl" cx=".6" cy=".25"><stop offset="0" stopColor="#8d87cf" /><stop offset="1" stopColor="#2b2560" /></radialGradient><circle cx="15" cy="15" r="13.500" fill="url(#ecl)" /><path d="M2 12.500h27M1.500 15.500h27.500M2 18.500h27" stroke="#c9c6ec" strokeWidth="1.300" /></svg>,
  vm: <svg width="28" height="28" viewBox="0 0 28 28"><path d="M2 3l9-1-1 3h6L15 1l10-1v10l-3-2v11l4 5v4l-14-1 4-4-3-1v-2h5V9h-5V6l-3 3v3h2v7H5v-5l3-1-2-3-3 3z" fill="#f3c811" /><path d="M7 10v3h5M15 7h3v9M7 18h5M15 12h-3" stroke="#3c2f00" strokeWidth="1.300" fill="none" /></svg>,
  dropbox: <svg width="30" height="30" viewBox="0 0 30 30"><rect width="30" height="30" rx="3" fill="#fff" /><FaDropbox x={5.5} y={6} size={19} color="#0f7fe5" /></svg>,
  weather: <svg width="30" height="30" viewBox="0 0 30 30"><rect width="30" height="30" fill="#0063b1" /><circle cx="15" cy="15" r="5.500" fill="#fff" /><path d="M15 5v3M15 22v3M5 15h3M22 15h3M8 8l2 2M20 20l2 2M22 8l-2 2M8 22l2-2" stroke="#fff" strokeWidth="1.300" /></svg>,
  idea: <svg width="30" height="30" viewBox="0 0 30 30"><path d="M3 1l10 0 6 8L3 21 1 13z" fill="#fc3163" /><path d="M0 16l8-7v15l-5-1z" fill="#f68a25" /><path d="M19 3l5-1 6 5-1 18-9 5-9-8z" fill="#1d7cf2" /><path d="M3 29l4-9 7 4z" fill="#b8608f" /><rect x="5" y="6" width="18" height="18" fill="#151515" /><text x="6.500" y="16" fontSize="11" fontWeight="700" fontFamily="Liberation Mono" fill="#fff">IJ</text><path d="M7 21h7" stroke="#fff" strokeWidth="1.700" /></svg>,
  chrome: <svg width="28" height="28" viewBox="0 0 28 28"><circle cx="14" cy="14" r="13.800" fill="#fdd033" /><path d="M14 14L2 7A13.800 13.800 0 0 1 26 7z" fill="#db4437" /><path d="M14 .2A13.800 13.800 0 0 1 26.200 7.700H14z" fill="#db4437" /><path d="M2 7a13.800 13.800 0 0 0 11 20.800l5.500-11L14 14 8.500 17z" fill="#159a5a" /><circle cx="14" cy="14" r="6.700" fill="#fff" /><circle cx="14" cy="14" r="5.300" fill="#4285f4" /></svg>,
  github: <svg width="28" height="28" viewBox="0 0 28 28"><circle cx="14" cy="14" r="13.800" fill="#eceaf3" /><path d="M5.500 6l4.500 2q4-1 8 0l4.500-2v5q2.500 6-1 8.500-2 1-4 1.500v6.500q-3 .8-7 0V24q-4 0-5-4l5 2q0-2-1-2.500-5-2.500-3-8.500z" fill="#5f2a87" /></svg>,
  npp: <svg width="30" height="30" viewBox="0 0 30 30"><path d="M2 3h19l2 23-20 1z" fill="#f1f4ec" /><path d="M3 18q9-7 19-3v10l-19 1z" fill="#7fd435" /><path d="M5 18q3-5 6-5 2-4 6-3 3 2 0 4l-4 1 4 4-6-1-2 4M6 15l5 4M13 22l4-1" stroke="#1b6a22" strokeWidth="1.700" fill="none" /><path d="M2 3h18" stroke="#888" strokeWidth="2" strokeDasharray="1.500 1.500" /><path d="M27 2l-7 18-1 5 3-4L29 3z" fill="#e49b2d" /></svg>,
  panel: <svg width="28" height="20" viewBox="0 0 28 20"><rect width="28" height="19" y=".5" fill="#5bb5e8" /><rect x="1.500" y="2" width="25" height="16" fill="#a8dcf7" /><circle cx="9" cy="8" r="5" fill="#2d86d0" /><path d="M9 8V3a5 5 0 0 1 5 5z" fill="#f7b22c" /><path d="M17 5h8M17 9h8M17 12h8M4 15.500h20" stroke="#2a7fc4" strokeWidth="1.500" /></svg>,
};
const TASKS = [['view'], ['files', 1], ['eclipse'], ['vm'], ['dropbox'], ['weather'], ['idea'], ['chrome', 1, 1], ['github', 1], ['npp', 1], ['panel', 1]];

export default function App() {
  return (
    <Screen>
      <Global />
      <TabStrip>
        {TABS.map(([icon, title], i) => {
          const on = i === TABS.length - 1;
          return (
            <Tab key={i} $active={on}>
              <TabIcon $active={on}>{icon}</TabIcon>
              <TabTitle>{title}</TabTitle>
              <TabClose viewBox="0 0 8 8"><path d="M.8.8l6.400 6.400M7.200.8L.8 7.200" stroke={on ? '#555' : '#8f9297'} strokeWidth="1.700" /></TabClose>
            </Tab>
          );
        })}
        <NewTab />
        <WindowControls>
          <UserBadge><svg width="24" height="17"><circle cx="12" cy="4.500" r="2" fill="#fff" /><path d="M8 11q0-3.500 4-3.500t4 3.500z" fill="#fff" /></svg></UserBadge>
          <ControlIcon viewBox="0 0 13 22"><path d="M0 10.500h13" stroke="#000" /></ControlIcon>
          <ControlIcon $gap={45} viewBox="0 0 13 22"><path d="M.5 8.500h9v9h-9zM3 8V5.500h9.500V15H10" fill="none" stroke="#000" /></ControlIcon>
          <ControlIcon $gap={46} viewBox="0 0 13 22"><path d="M.5 5l12 12M12.500 5L.5 17" stroke="#000" strokeWidth="1.100" /></ControlIcon>
        </WindowControls>
      </TabStrip>

      <ToolArea>
        <Toolbar>
          <NavIcon $gap={13} viewBox="0 0 17 17" fill="none" stroke="#c2c2c2" strokeWidth="2.200"><path d="M16 8.500H2M8 2L1.500 8.500 8 15" /></NavIcon>
          <NavIcon $gap={12} viewBox="0 0 17 17" fill="none" stroke="#c2c2c2" strokeWidth="2.200"><path d="M1 8.500h14M9 2l6.500 6.500L9 15" /></NavIcon>
          <NavIcon $gap={2} viewBox="0 0 17 17"><path d="M13.500 4.500A6 6 0 1 0 14.500 10" fill="none" stroke="#4c4c4c" strokeWidth="2.600" /><path d="M16 1v7H9z" fill="#4c4c4c" /></NavIcon>
          <Omnibox>
            <svg width="13" height="16" viewBox="0 0 13 16"><path d="M1 .8h7L12 5v10.200H1zM7.500.8v4.700H12" fill="#fff" stroke="#777" strokeWidth="1.200" /></svg>
            <Url>file:///C:/Users/KARTHIK/Desktop/directions.html</Url>
            <svg width="18" height="18" viewBox="0 0 18 18"><path d="M9 1l2.300 5.600 6 .4-4.600 3.900 1.500 5.900L9 13.600l-5.200 3.200 1.500-5.900L.7 7l6-.4z" fill="#fff" stroke="#7a7a7a" strokeWidth="1.100" /></svg>
          </Omnibox>
          <Extensions>
            <svg width="20" height="20" viewBox="0 0 20 20"><path d="M6 0h8l6 6v8l-6 6H6l-6-6V6z" fill="#c70d10" /><text x="10" y="13.300" fontSize="9.500" textLength="17" lengthAdjust="spacingAndGlyphs" fontWeight="700" textAnchor="middle" fill="#fff" fontFamily="Liberation Sans">ABP</text></svg>
            <svg width="16" height="16" viewBox="0 0 16 16" fill="none" stroke="#bcbcbc" strokeWidth="1.700"><path d="M1 1h14v14H1zM4 4.500h8M4 8h8v4H4zM8 8v4" /></svg>
            <Drive grey />
            <svg width="20" height="20" viewBox="0 0 20 20"><circle cx="10" cy="10" r="9.700" fill="#1fb978" /><path d="M14 6.500A5.200 5.200 0 1 0 15 11h-3.800" fill="none" stroke="#fff" strokeWidth="1.800" /></svg>
            <svg width="13" height="14" viewBox="0 0 13 14"><path d="M0 2h13M0 7h13M0 12h13" stroke="#4d4d4d" strokeWidth="3" /></svg>
          </Extensions>
        </Toolbar>
        <Bookmarks>
          {BOOKMARKS.map(([w, icon, text, fade = true], i) => (
            <Bookmark key={i} $w={w}>{icon}<BookmarkText $fade={fade}>{text}</BookmarkText></Bookmark>
          ))}
          <More>»</More>
        </Bookmarks>
      </ToolArea>

      <Page>
        <SiteNav>
          <Brand>My location</Brand>
          <NavLink>Give Directions</NavLink>
          <NavLink>weather</NavLink>
          <NavLink>signout</NavLink>
        </SiteNav>
        <Heading>Enter currentlocation and destination and get directions:</Heading>
        <Fields>
          <Field defaultValue="newyork" />
          <Field defaultValue="illinois" />
        </Fields>
        <Submit>submit</Submit>
        <MapBox>
          <RoadMap />
          <MapTypes>
            <MapType $on $w={37.5}>Map</MapType>
            <MapType $w={55.5}>Satellite</MapType>
          </MapTypes>
          <MapControl $top={433} $h={28}>
            <svg width="28" height="28" viewBox="0 0 28 28"><circle cx="14" cy="7" r="3.500" fill="#f9b51b" stroke="#c98a14" strokeWidth=".6" /><path d="M11 10.500h6q2 1 2 7l-1.500.5L17 23h-2.400l-.6-4-.6 4H11l-.5-5L9 17.500q0-6 2-7z" fill="#f9b51b" stroke="#8f7a4a" strokeWidth=".6" /><path d="M12.500 10.500h3L14 12.500z" fill="#e2641b" /></svg>
          </MapControl>
          <MapControl $top={471} $h={55}>
            <svg width="28" height="55" viewBox="0 0 28 55"><path d="M9.500 13.500h10M14.500 8.500v10M9.500 41.500h10" stroke="#666" strokeWidth="2.600" /><path d="M9 27.500h19" stroke="#e6e6e6" /></svg>
          </MapControl>
          <MapFooter>
            <FootItem $w={150} $pad={3} $ls={0.14}>Map data ©2016 Google, INEGI</FootItem>
            <FootItem $w={71} $ls={0.14}>Terms of Use</FootItem>
            <FootItem $w={96} $ls={0.14}>Report a map error</FootItem>
          </MapFooter>
        </MapBox>
      </Page>

      <ScrollTrack>
        <ScrollArrow viewBox="0 0 17 17"><path d="M10 5v7L6 8.500z" fill="#a0a0a0" /></ScrollArrow>
        <ScrollThumb />
        <ScrollArrow viewBox="0 0 17 17"><path d="M7 5v7l4-3.500z" fill="#505050" /></ScrollArrow>
      </ScrollTrack>

      <Taskbar>
        <Start><svg width="20" height="20" viewBox="0 0 20 20" fill="#fff"><path d="M0 3l8.500-1.400V9.500H0zM9.500 1.400L20 0v9.500H9.500zM0 10.500h8.500v8L0 17.200zM9.500 10.500H20V20L9.500 18.600z" /></svg></Start>
        <Cortana><Ring />I’m Cortana. Ask me anything.</Cortana>
        {TASKS.map(([k, open, active]) => <TaskItem key={k} $open={open} $active={active}>{TaskIcons[k]}</TaskItem>)}
        <Tray>
          <TrayIcon $w={17} $gap={22} viewBox="0 0 17 30"><path d="M1 19l7.500-8 7.500 8" fill="none" stroke="#fff" strokeWidth="1.400" /></TrayIcon>
          <TrayIcon $w={20} $gap={20} viewBox="0 0 20 30"><FaDropbox x={0} y={5} size={18} color="#fff" /><circle cx="14" cy="19" r="5" fill="#2fa83a" /><path d="M11.500 19l2 2 3-4" stroke="#fff" fill="none" strokeWidth="1.300" /></TrayIcon>
          <TrayIcon $w={20} $gap={22} viewBox="0 0 20 30"><path d="M.7 10h17v10H.7z" fill="none" stroke="#fff" strokeWidth="1.300" /><path d="M2 11.500h7v7H2zM18 13h1.600v4H18z" fill="#fff" /></TrayIcon>
          <TrayIcon $w={17} $gap={20} viewBox="0 0 17 30" fill="none"><path d="M1 22Q2 9 16 8M5 22q1-9 11-10M9 22q1-5 7-6" stroke="#c8c8c8" strokeWidth="1.400" /><circle cx="14" cy="21" r="1.800" fill="#fff" /></TrayIcon>
          <TrayIcon $w={20} $gap={20} viewBox="0 0 20 30" fill="none"><path d="M1 12.500h2.500l4-4v13l-4-4H1z" stroke="#fff" strokeWidth="1.200" /><path d="M10.500 12.500q1.500 2.500 0 5M13 10.500q3 4.500 0 9" stroke="#ddd" strokeWidth="1.200" /><path d="M16 8.500q4.500 6.500 0 13" stroke="#777" strokeWidth="1.200" /></TrayIcon>
          <TrayIcon $w={20} $gap={20} viewBox="0 0 20 30"><path d="M0 5h20v17h-7l-3 3-3-3H0z" fill="#fff" /><path d="M4 9.500h12M4 13.500h12M4 17.500h8" stroke="#111" strokeWidth="1.300" /></TrayIcon>
          <TrayIcon $w={30} $gap={21} viewBox="0 0 30 30"><path d="M.7 7h28.600v16H.7z" fill="none" stroke="#fff" strokeWidth="1.300" /><path d="M4 11.500h22M4 15h22" stroke="#fff" strokeWidth="1.300" strokeDasharray="1.500 1.600" /><path d="M4 19h3M9 19h12M23 19h3" stroke="#fff" strokeWidth="1.300" /></TrayIcon>
          <Clock>11:49 PM<br />9/7/2016</Clock>
          <DesktopEdge />
        </Tray>
      </Taskbar>
    </Screen>
  );
}
